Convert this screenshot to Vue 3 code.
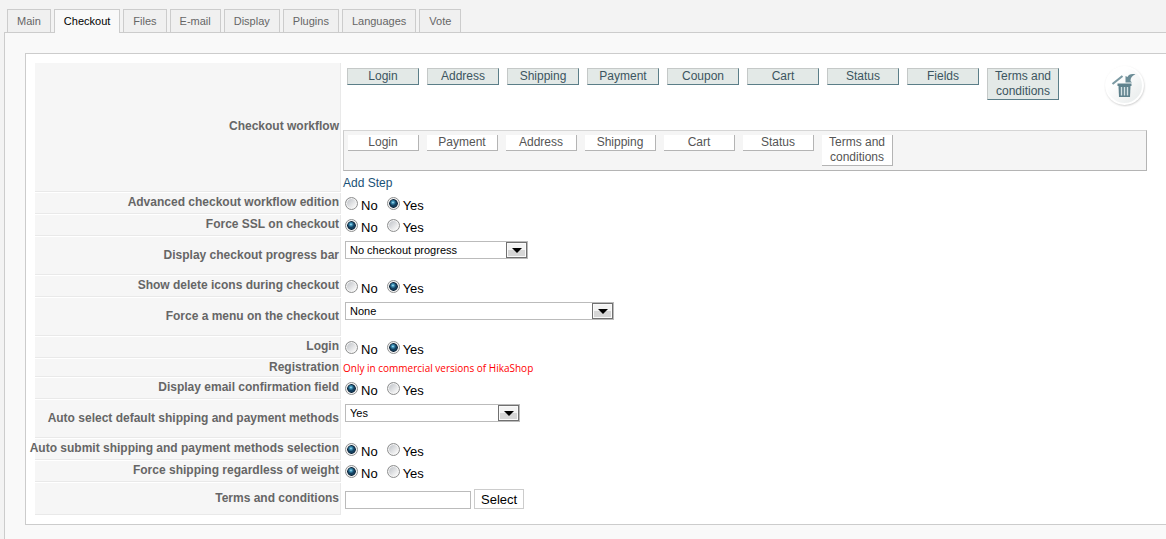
<template>
  <div class="config-page">
    <nav class="tabs">
      <a
        v-for="tab in tabs"
        :key="tab"
        href="#"
        :class="{ active: tab === currentTab }"
        @click.prevent="currentTab = tab"
      >{{ tab }}</a>
    </nav>

    <div class="tab-panel">
      <form class="settings" @submit.prevent>
        <div class="row">
          <div class="name">Checkout workflow</div>
          <div class="value workflow">
            <div class="available">
              <ul class="chips">
                <li v-for="item in available" :key="item">{{ item }}</li>
              </ul>
              <button type="button" class="trash" aria-label="Delete">
                <svg viewBox="0 0 44 44" width="44" height="44">
                  <defs>
                    <linearGradient id="disc" x1="0" y1="0" x2="1" y2="1">
                      <stop offset="0.300" stop-color="#fff" />
                      <stop offset="1" stop-color="#e6eaea" />
                    </linearGradient>
                    <filter id="soft" x="-20%" y="-20%" width="140%" height="140%">
                      <feGaussianBlur stdDeviation="1" />
                    </filter>
                  </defs>
                  <circle cx="22" cy="23.500" r="19" fill="#bbb" filter="url(#soft)" />
                  <circle cx="21.500" cy="22.500" r="19.500" fill="#fff" />
                  <circle cx="21.500" cy="22.500" r="17.500" fill="url(#disc)" />
                  <path d="M9.500 21L19.500 13" stroke="#7c9aa3" stroke-width="2.200" />
                  <path d="M32.500 11.500c-4-1-7 0-8 2.500l-2-1v6.500h6.500l-1.500-1.500c0-3 1.500-5.500 5-6.500z" fill="#6b8c96" />
                  <path d="M14.500 20.500h14v2.500h-14z" fill="#5f828d" />
                  <path d="M15.500 23h12l-.5 11h-11z" fill="#5f828d" />
                  <path d="M18.500 24v8.500M21.500 24v8.500M24.500 24v8.500" stroke="#d5e2e5" stroke-width="1.400" />
                </svg>
              </button>
            </div>
            <ul class="chips step">
              <li v-for="item in step" :key="item">{{ item }}</li>
            </ul>
            <a href="#" class="add-step" @click.prevent>Add Step</a>
          </div>
        </div>

        <div v-for="field in fields" :key="field.id" class="row" :class="field.type">
          <label v-if="field.type === 'select' || field.type === 'terms'" class="name" :for="field.id">{{ field.label }}</label>
          <div v-else class="name" :id="field.id">{{ field.label }}</div>

          <div v-if="field.type === 'radio'" class="value" role="radiogroup" :aria-labelledby="field.id">
            <label v-for="option in ['No', 'Yes']" :key="option" class="option">
              <input v-model="field.value" type="radio" :name="field.id" :value="option">
              <span>{{ option }}</span>
            </label>
          </div>

          <div v-else-if="field.type === 'select'" class="value">
            <div class="dropdown" :class="field.size">
              <select :id="field.id" v-model="field.value">
                <option v-for="option in field.options" :key="option">{{ option }}</option>
              </select>
              <span class="arrow">
                <svg viewBox="0 0 10 5" width="10" height="5"><path d="M0 0h10L5 5z" /></svg>
              </span>
            </div>
          </div>

          <div v-else-if="field.type === 'notice'" class="value">{{ field.value }}</div>

          <div v-else class="value">
            <input :id="field.id" v-model="field.value" type="text">
            <button type="button" class="pick">Select</button>
          </div>
        </div>
      </form>
    </div>
  </div>
</template>

<script setup>
import { ref } from 'vue'

const tabs = ['Main', 'Checkout', 'Files', 'E-mail', 'Display', 'Plugins', 'Languages', 'Vote']
const currentTab = ref('Checkout')

const available = ['Login', 'Address', 'Shipping', 'Payment', 'Coupon', 'Cart', 'Status', 'Fields', 'Terms and conditions']
const step = ['Login', 'Payment', 'Address', 'Shipping', 'Cart', 'Status', 'Terms and conditions']

const fields = ref([
  { id: 'advanced', type: 'radio', label: 'Advanced checkout workflow edition', value: 'Yes' },
  { id: 'ssl', type: 'radio', label: 'Force SSL on checkout', value: 'No' },
  { id: 'progress', type: 'select', size: 'medium', label: 'Display checkout progress bar', value: 'No checkout progress', options: ['No checkout progress'] },
  { id: 'delete', type: 'radio', label: 'Show delete icons during checkout', value: 'Yes' },
  { id: 'menu', type: 'select', size: 'large', label: 'Force a menu on the checkout', value: 'None', options: ['None'] },
  { id: 'login', type: 'radio', label: 'Login', value: 'Yes' },
  { id: 'registration', type: 'notice', label: 'Registration', value: 'Only in commercial versions of HikaShop' },
  { id: 'email', type: 'radio', label: 'Display email confirmation field', value: 'No' },
  { id: 'autoselect', type: 'select', size: 'small', label: 'Auto select default shipping and payment methods', value: 'Yes', options: ['Yes', 'No'] },
  { id: 'autosubmit', type: 'radio', label: 'Auto submit shipping and payment methods selection', value: 'No' },
  { id: 'weight', type: 'radio', label: 'Force shipping regardless of weight', value: 'No' },
  { id: 'terms', type: 'terms', label: 'Terms and conditions', value: '' }
])
</script>

<style>
body {
  background: #f3f3f3;
}
</style>

<style scoped>
.config-page {
  padding: 9px 0 0 4px;
  min-height: 100vh;
  box-sizing: border-box;
  display: flex;
  flex-direction: column;
  overflow: hidden;
  font-family: "Liberation Sans", Arial, sans-serif;
  font-size: 12px;
  line-height: 15px;
  color: #666;
}

.tabs {
  display: flex;
  gap: 3px;
  padding-left: 3px;
}

.tabs a {
  padding: 4px 9px 3px;
  border: 1px solid #ccc;
  border-bottom: 0;
  background: #f0f0f0;
  color: #666;
  font-size: 11px;
  text-decoration: none;
}

.tabs a.active {
  position: relative;
  margin-bottom: -1px;
  padding-bottom: 4px;
  background: #f9f9f9;
  color: #000;
}

.tab-panel {
  flex: 1;
  padding: 20px 0 14px 20px;
  border: 1px solid #ccc;
  border-width: 1px 0 0 1px;
  background: #f9f9f9;
}

.settings {
  display: flex;
  flex-direction: column;
  gap: 1px;
  padding: 9px 19px 9px 9px;
  border: 1px solid #ccc;
  border-right: 0;
  background: #fff;
}

.row {
  display: grid;
  grid-template-columns: 306px 1fr;
  column-gap: 2px;
}

.name {
  display: flex;
  align-items: center;
  justify-content: flex-end;
  padding: 0 1px 1px;
  border: 1px solid #e9e9e9;
  border-width: 0 1px 1px 0;
  background: #f6f6f6;
  font-weight: bold;
  white-space: nowrap;
}

.value {
  display: flex;
}

.workflow {
  flex-direction: column;
}

.available {
  display: flex;
  justify-content: space-between;
  height: 67px;
}

.chips {
  display: flex;
  align-items: flex-start;
  gap: 8px;
  margin: 0;
  padding: 5px 4px;
  list-style: none;
  text-align: center;
}

.chips li {
  box-sizing: border-box;
  width: 72px;
  border: 1px solid #5b7e88;
  border-top-color: #c5c9c8;
  border-left-color: #c5c9c8;
  background: #e3e9e7;
  color: #3c5560;
}

.step {
  padding: 4px;
  border: 1px solid #b4b4b4;
  border-top-color: #d5d5d5;
  border-left-color: #ccc;
  background: #f5f5f5;
}

.step li {
  width: 71px;
  border: 1px solid #b4b4b4;
  border-width: 0 1px 1px 0;
  background: #fff;
  color: #555;
}

.trash {
  width: 44px;
  height: 44px;
  padding: 0;
  border: 0;
  background: none;
}

.trash svg {
  display: block;
}

.add-step {
  align-self: flex-start;
  padding: 5px 0 1px;
  color: #1a5277;
  text-decoration: none;
}

.radio {
  min-height: 21px;
}

.radio .value {
  gap: 9px;
  padding-left: 2px;
}

.option {
  display: flex;
  gap: 3px;
  color: #000;
  font-size: 13px;
}

.option span {
  padding-top: 5px;
}

.option input {
  appearance: none;
  box-sizing: border-box;
  width: 13px;
  height: 13px;
  margin: 4px 0 0;
  border: 1px solid #8e8f8f;
  border-radius: 50%;
  background: linear-gradient(135deg, #b8bcc2, #f6f6f6 80%);
  box-shadow: inset 0 0 0 1px #f4f4f4;
}

.option input:checked {
  background:
    radial-gradient(circle at 45% 40%, #d5f2fb 0, #4aa3c8 1px, transparent 3px),
    radial-gradient(circle at center, #14405f 3px, #0b2338 4px, #f4f4f4 5px);
}

.select {
  min-height: 38px;
}

.dropdown {
  position: relative;
  margin: 4px 2px 0;
  height: 18px;
}

.medium {
  width: 183px;
}

.large {
  width: 269px;
}

.small {
  width: 175px;
}

.dropdown select {
  appearance: none;
  width: 100%;
  height: 18px;
  padding: 0 24px 0 4px;
  border: 1px solid #bbb;
  border-radius: 0;
  background: #fff;
  color: #000;
  font-family: inherit;
  font-size: 11px;
}

.arrow {
  position: absolute;
  top: 1px;
  right: 1px;
  display: flex;
  align-items: center;
  justify-content: center;
  box-sizing: border-box;
  width: 21px;
  height: 16px;
  border: 1px solid #707070;
  background: linear-gradient(#f3f3f3 50%, #d6d6d6 50%);
  box-shadow: inset 0 0 0 1px #fafafa;
  pointer-events: none;
}

.notice {
  min-height: 18px;
}

.notice .value {
  align-items: center;
  color: #f00;
  font-family: "Open Sans", Verdana, sans-serif;
  font-size: 10px;
}

.terms {
  min-height: 32px;
}

.terms .value {
  align-items: flex-end;
  gap: 3px;
  padding: 0 2px 6px;
}

.terms input {
  box-sizing: border-box;
  width: 126px;
  height: 18px;
  border: 1px solid #bbb;
  background: #fff;
}

.pick {
  height: 20px;
  padding: 0 6px;
  border: 1px solid #ccc;
  background: #fff;
  color: #000;
  font-family: inherit;
  font-size: 13px;
}
</style>
